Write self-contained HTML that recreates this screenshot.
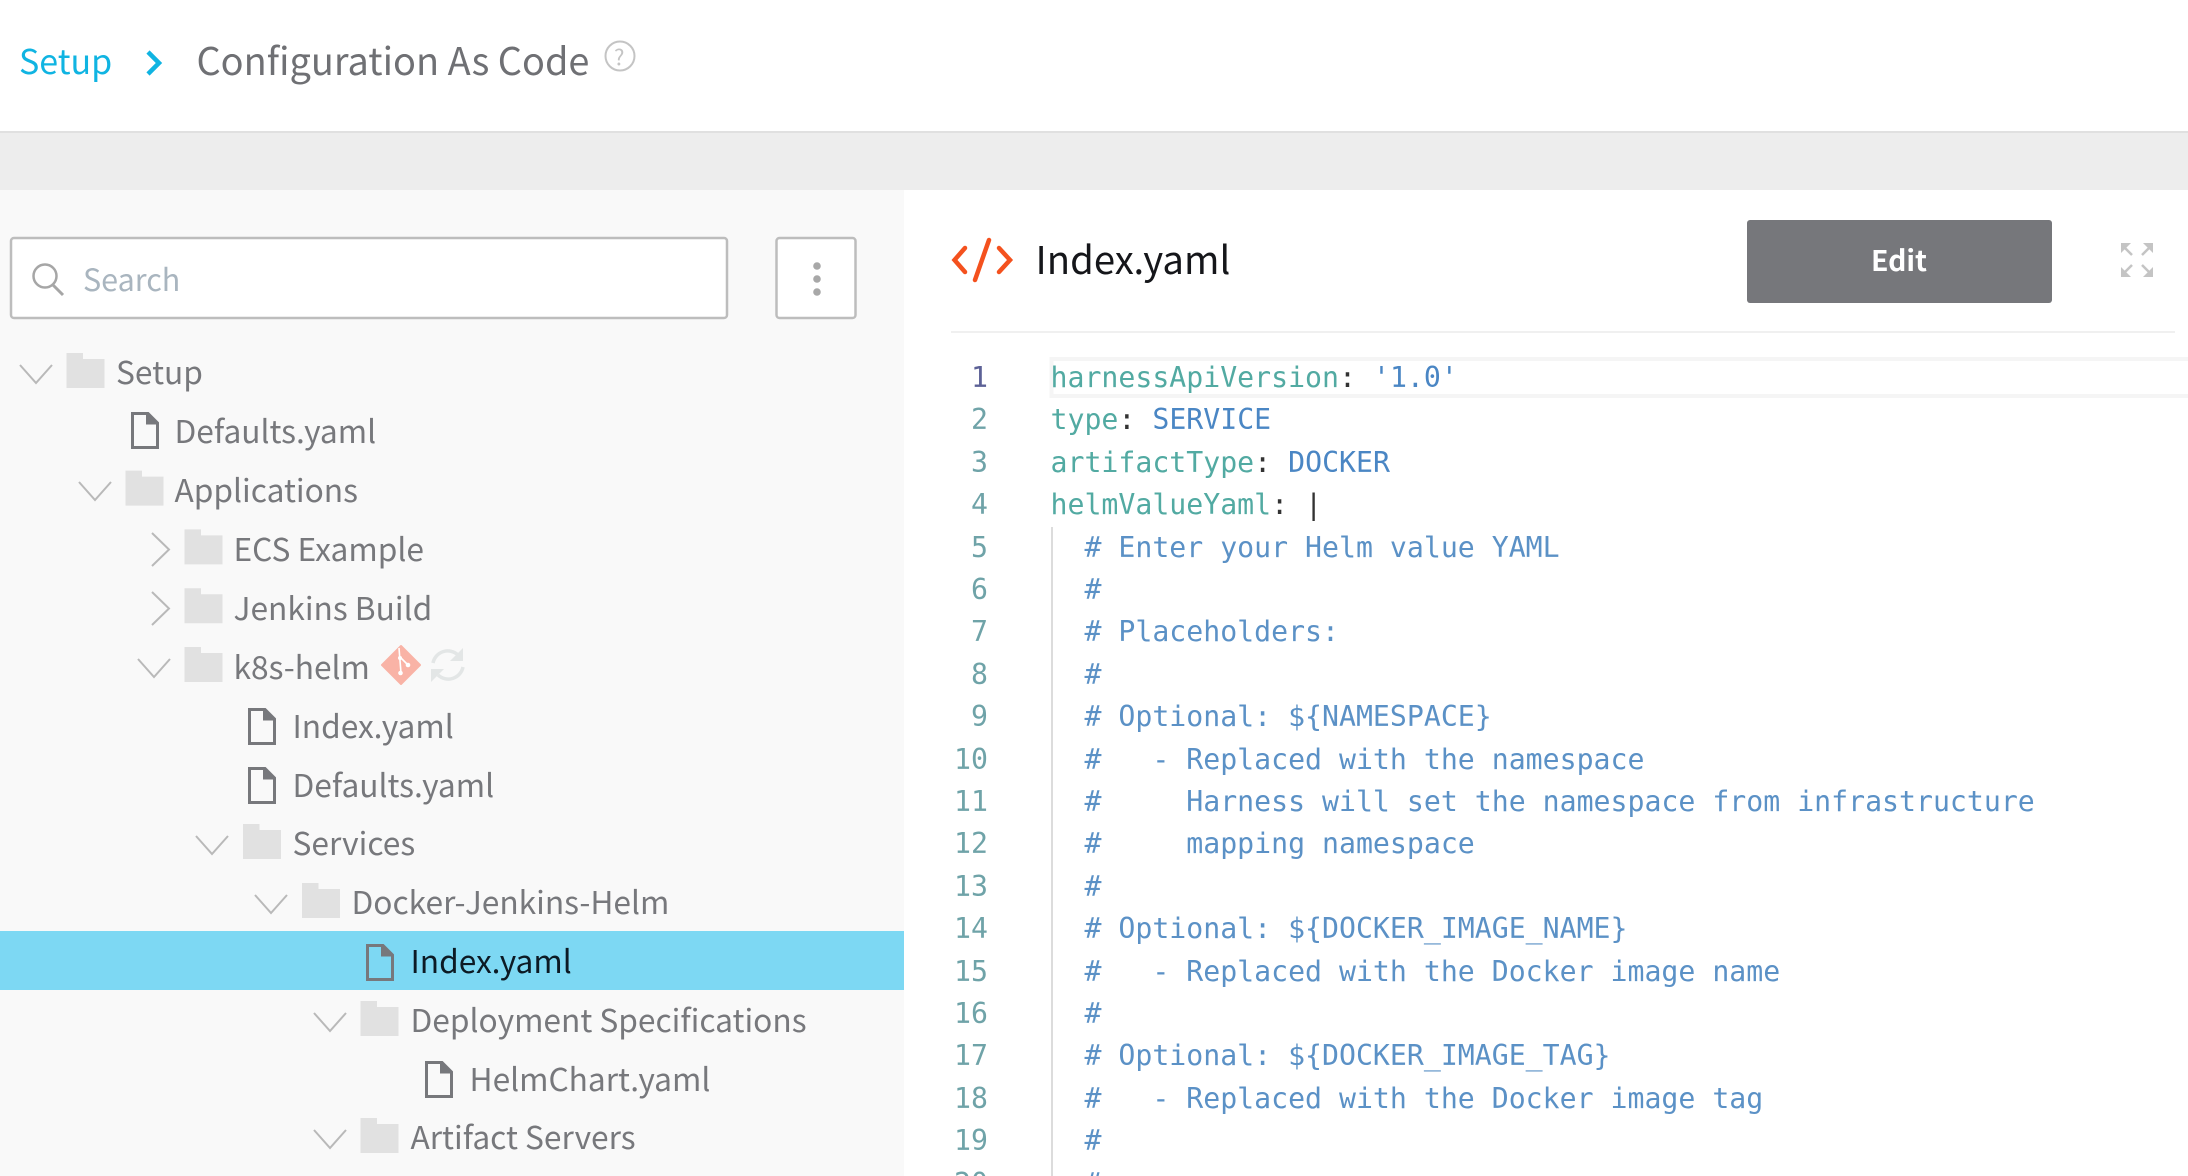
<!DOCTYPE html>
<html lang="en">
<head>
<meta charset="utf-8">
<title>Configuration As Code</title>
<style>
html,body{margin:0;padding:0;background:#fff;width:2188px;height:1176px;overflow:hidden;}
#w{position:relative;width:2188px;height:1176px;overflow:hidden;font-family:"Noto Sans CJK SC","Liberation Sans",sans-serif;}
svg.g{position:absolute;left:0;top:0;}
.t{position:absolute;white-space:pre;line-height:40px;height:40px;font-size:31.7px;color:#77787c;}
.c{position:absolute;white-space:pre;font-family:"DejaVu Sans Mono","Liberation Mono",monospace;font-size:28.2px;line-height:42px;height:42px;left:1050.500px;color:#5b91c6;}
.n{position:absolute;white-space:pre;font-family:"DejaVu Sans Mono","Liberation Mono",monospace;font-size:28.2px;line-height:42px;height:42px;left:950px;width:38px;text-align:right;color:#6fa3a8;}
.k{color:#52aaa2}.p{color:#333}.v{color:#4a86c4}
</style>
</head>
<body>
<div id="w">
<svg class="g" width="2188" height="1176" viewBox="0 0 2188 1176" fill="none">
<defs>
<g id="fo"><path d="M0 0H16.500V6H38V35H0Z" fill="#e1e1e1"/></g>
<g id="fi"><path d="M1.500 35.500V1.500H17L26.500 11V35.500Z" fill="none" stroke="#77787c" stroke-width="3"/><path d="M15 1L27 12.500H15Z" fill="#77787c"/></g>
<path id="cd" d="M0 0L16 18L32 0" stroke="#b9b9b9" stroke-width="2"/>
<path id="cr" d="M0 0L17 16.500L0 33" stroke="#b9b9b9" stroke-width="2"/>
</defs>
<rect x="0" y="131" width="2188" height="2" fill="#e0e0e0"/>
<rect x="0" y="133" width="2188" height="57" fill="#ededed"/>
<rect x="0" y="190" width="904" height="986" fill="#f9f9f9"/>
<rect x="0" y="931" width="904" height="59" fill="#7dd8f3"/>

<path d="M148 52L159 63L148 74" stroke="#10b4e2" stroke-width="4.500" stroke-linejoin="miter"/>
<circle cx="620" cy="56" r="14.500" stroke="#c4c4c4" stroke-width="2"/>

<rect x="11" y="238" width="716" height="80" rx="3" fill="#fff" stroke="#bdbdbd" stroke-width="2.500"/>
<rect x="776.500" y="238" width="79" height="80" rx="3" fill="#fff" stroke="#bdbdbd" stroke-width="2.500"/>
<circle cx="817" cy="266" r="3.800" fill="#a8a8a8"/><circle cx="817" cy="279" r="3.800" fill="#a8a8a8"/><circle cx="817" cy="292" r="3.800" fill="#a8a8a8"/>
<circle cx="45" cy="276" r="11.500" stroke="#a6a6a6" stroke-width="2.500"/><path d="M53 285L63 295" stroke="#a6a6a6" stroke-width="3"/>

<use href="#cd" x="20" y="365"/><use href="#fo" x="66.500" y="353"/>
<use href="#fi" x="131" y="412"/>
<use href="#cd" x="79" y="482"/><use href="#fo" x="125.500" y="470.600"/>
<use href="#cr" x="152" y="533"/><use href="#fo" x="184.500" y="529.400"/>
<use href="#cr" x="152" y="592"/><use href="#fo" x="184.500" y="588.200"/>
<use href="#cd" x="138" y="659"/><use href="#fo" x="184.500" y="647"/>
<use href="#fi" x="248" y="708"/>
<use href="#fi" x="248" y="767"/>
<use href="#cd" x="196" y="836"/><use href="#fo" x="243" y="824"/>
<use href="#cd" x="255" y="895"/><use href="#fo" x="302" y="883"/>
<use href="#fi" x="366" y="944"/>
<use href="#cd" x="314" y="1013"/><use href="#fo" x="360.500" y="1001"/>
<use href="#fi" x="425" y="1061"/>
<use href="#cd" x="314" y="1130"/><use href="#fo" x="360.500" y="1118"/>

<path d="M401 646L420 665L401 684L382 665Z" fill="#f9b3a6" stroke="#f9b3a6" stroke-width="2" stroke-linejoin="round"/>
<path d="M399 648L401 673M401 658L408 665" stroke="#fff" stroke-width="1.600"/>
<circle cx="400.500" cy="673" r="2.300" fill="#fff"/><circle cx="408" cy="665" r="2.300" fill="#fff"/><circle cx="400" cy="658" r="2" fill="#fff"/>
<path d="M433 663A15 15 0 0 1 458 655M463 667A15 15 0 0 1 438 675" stroke="#e3e6e6" stroke-width="3.500"/>
<path d="M463 648V661H450Z M431 682V669H444Z" fill="#e3e6e6"/>

<path d="M965 248L954.500 260L965 272M999 248L1010 260L999 272M989 240L975 280" stroke="#f4511e" stroke-width="4.500" stroke-linecap="round" stroke-linejoin="miter"/>
<rect x="1747" y="220" width="305" height="83" rx="3" fill="#76777b"/>
<g stroke="#c4c4c4" stroke-width="2.500"><path d="M2132 255L2122 245M2142 255L2152 245M2132 265L2122 275M2142 265L2152 275"/></g>
<path d="M2121 243H2131L2121 253Z M2153 243H2143L2153 253Z M2121 277H2131L2121 267Z M2153 277H2143L2153 267Z" fill="#c4c4c4"/>
<rect x="951" y="331" width="1224" height="2" fill="#f0f0f0"/>
<path d="M2188 359H1051.500V396H2188" stroke="#f5f5f5" stroke-width="4"/>
<rect x="1051" y="527" width="2" height="649" fill="#dcdcdc"/>
</svg>

<div class="t" style="left:19px;top:38px;font-size:34px;line-height:44px;height:44px;color:#10b4e2">Setup</div>
<div class="t" style="left:196.500px;top:36.500px;font-size:37.900px;line-height:44px;height:44px;color:#6f7074">Configuration As Code</div>
<div class="t" style="left:614px;top:42px;font-size:22px;line-height:28px;height:28px;color:#c4c4c4">?</div>
<div class="t" style="left:83px;top:258px;font-size:30.500px;color:#a9b5bf">Search</div>

<div class="t" style="left:116px;top:351px">Setup</div>
<div class="t" style="left:174.500px;top:410px">Defaults.yaml</div>
<div class="t" style="left:174.500px;top:469px">Applications</div>
<div class="t" style="left:233.500px;top:528px">ECS Example</div>
<div class="t" style="left:233.500px;top:587px">Jenkins Build</div>
<div class="t" style="left:233.500px;top:646px">k8s-helm</div>
<div class="t" style="left:292.500px;top:705px">Index.yaml</div>
<div class="t" style="left:292.500px;top:763.500px">Defaults.yaml</div>
<div class="t" style="left:292.500px;top:822px">Services</div>
<div class="t" style="left:351.500px;top:881px">Docker-Jenkins-Helm</div>
<div class="t" style="left:410.500px;top:940px;color:#0c1a24">Index.yaml</div>
<div class="t" style="left:410.500px;top:998.500px">Deployment Specifications</div>
<div class="t" style="left:469.500px;top:1057.500px">HelmChart.yaml</div>
<div class="t" style="left:410.500px;top:1116px">Artifact Servers</div>

<div class="t" style="left:1035.500px;top:237px;font-size:38.300px;line-height:44px;height:44px;color:#15161a">Index.yaml</div>
<div class="t" style="left:1871px;top:240px;font-size:28.400px;font-weight:700;color:#fff">Edit</div>

<div class="n" style="top:357px;color:#5c6196">1</div><div class="c" style="top:357px"><span class="k">harnessApiVersion</span><span class="p">:</span> <span class="v">'1.0'</span></div>
<div class="n" style="top:399px">2</div><div class="c" style="top:399px"><span class="k">type</span><span class="p">:</span> <span class="v">SERVICE</span></div>
<div class="n" style="top:442px">3</div><div class="c" style="top:442px"><span class="k">artifactType</span><span class="p">:</span> <span class="v">DOCKER</span></div>
<div class="n" style="top:484px">4</div><div class="c" style="top:484px"><span class="k">helmValueYaml</span><span class="p">:</span> <span class="p">|</span></div>
<div class="n" style="top:527px">5</div><div class="c" style="top:527px">  # Enter your Helm value YAML</div>
<div class="n" style="top:569px">6</div><div class="c" style="top:569px">  #</div>
<div class="n" style="top:611px">7</div><div class="c" style="top:611px">  # Placeholders:</div>
<div class="n" style="top:654px">8</div><div class="c" style="top:654px">  #</div>
<div class="n" style="top:696px">9</div><div class="c" style="top:696px">  # Optional: ${NAMESPACE}</div>
<div class="n" style="top:739px">10</div><div class="c" style="top:739px">  #   - Replaced with the namespace</div>
<div class="n" style="top:781px">11</div><div class="c" style="top:781px">  #     Harness will set the namespace from infrastructure</div>
<div class="n" style="top:823px">12</div><div class="c" style="top:823px">  #     mapping namespace</div>
<div class="n" style="top:866px">13</div><div class="c" style="top:866px">  #</div>
<div class="n" style="top:908px">14</div><div class="c" style="top:908px">  # Optional: ${DOCKER_IMAGE_NAME}</div>
<div class="n" style="top:951px">15</div><div class="c" style="top:951px">  #   - Replaced with the Docker image name</div>
<div class="n" style="top:993px">16</div><div class="c" style="top:993px">  #</div>
<div class="n" style="top:1035px">17</div><div class="c" style="top:1035px">  # Optional: ${DOCKER_IMAGE_TAG}</div>
<div class="n" style="top:1078px">18</div><div class="c" style="top:1078px">  #   - Replaced with the Docker image tag</div>
<div class="n" style="top:1120px">19</div><div class="c" style="top:1120px">  #</div>
<div class="n" style="top:1163px">20</div><div class="c" style="top:1163px">  #</div>
</div>
</body>
</html>
